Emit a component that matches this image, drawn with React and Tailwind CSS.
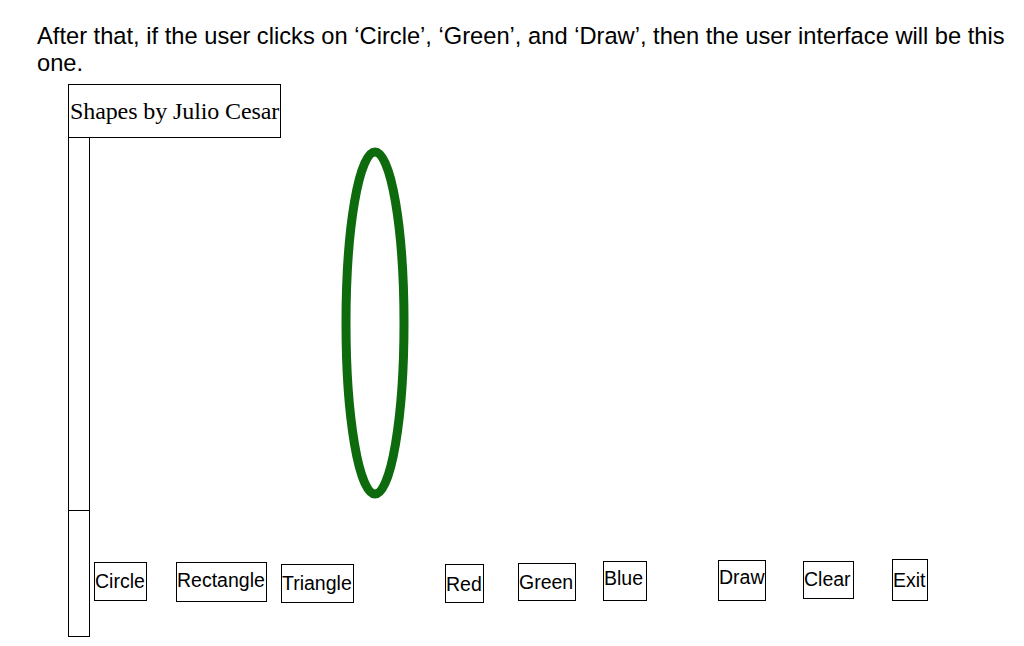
import React from 'react';

const buttons = [
  { label: 'Circle', cls: 'ml-[4px] mt-[52px] w-[53px] h-[39px] pt-[7px]' },
  { label: 'Rectangle', cls: 'ml-[29px] mt-[52px] w-[91px] h-[40px] pt-[6px]' },
  { label: 'Triangle', cls: 'ml-[14px] mt-[54px] w-[73px] h-[39px] pt-[7px]' },
  { label: 'Red', cls: 'ml-[91px] mt-[54px] w-[39px] h-[39px] pt-[8px]' },
  { label: 'Green', cls: 'ml-[34px] mt-[53px] w-[58px] h-[38px] pt-[7px]' },
  { label: 'Blue', cls: 'ml-[27px] mt-[51px] w-[44px] h-[40px] pt-[5px]' },
  { label: 'Draw', cls: 'ml-[71px] mt-[50px] w-[48px] h-[41px] pt-[5px]' },
  { label: 'Clear', cls: 'ml-[37px] mt-[51px] w-[51px] h-[38px] pt-[6px]' },
  { label: 'Exit', cls: 'ml-[38px] mt-[49px] w-[36px] h-[42px] pt-[9px]' },
];

const App = () => {
  return (
    <div className="w-[1024px] h-[646px] bg-white overflow-hidden text-black">
      {/* Caption */}
      <p className="pl-[37px] pr-[4px] pt-[23px] text-[23.7px] leading-[27px] font-['Liberation_Sans',Arial,sans-serif]">
        After that, if the user clicks on ‘Circle’, ‘Green’, and ‘Draw’, then the user interface will be this one.
      </p>

      <div className="ml-[68px] mt-[7px]">
        {/* Title */}
        <div className="w-[213px] h-[54px] border border-black flex items-center pl-[1px] font-['Liberation_Serif','Times_New_Roman',serif] text-[24px] tracking-[-0.1px] whitespace-nowrap">
          Shapes by Julio Cesar
        </div>

        <div className="flex">
          {/* Left bar */}
          <div className="flex flex-col w-[22px]">
            <div className="h-[373px] border border-t-0 border-black"></div>
            <div className="h-[126px] border border-t-0 border-black"></div>
          </div>

          {/* Canvas */}
          <div className="flex flex-col w-[860px] h-[499px]">
            <svg width="860" height="372" className="block">
              <ellipse cx="285" cy="185" rx="29" ry="171" fill="none" stroke="#0d6b0d" strokeWidth="9" />
            </svg>
            <div className="flex items-start font-['Liberation_Sans',Arial,sans-serif] text-[19.5px] leading-[22px]">
              {buttons.map((b) => (
                <div key={b.label} className={`${b.cls} shrink-0 border border-black whitespace-nowrap`}>
                  {b.label}
                </div>
              ))}
            </div>
          </div>
        </div>
      </div>
    </div>
  );
};

export default App;
